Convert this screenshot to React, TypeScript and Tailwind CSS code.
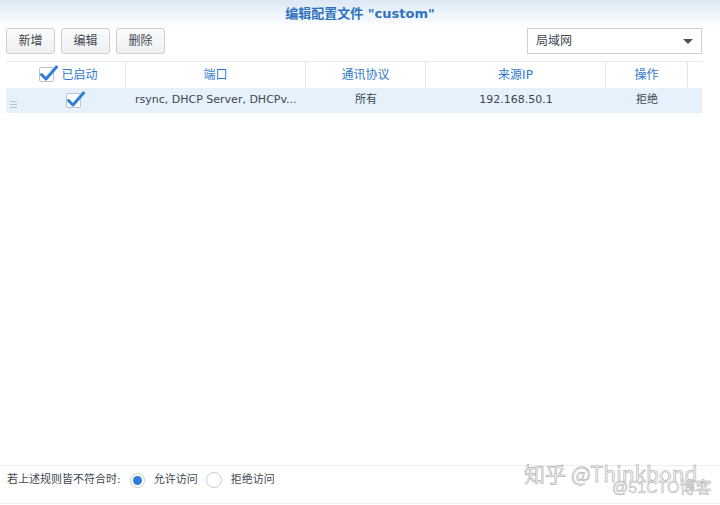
import React from "react";

const latin = "font-['DejaVu_Sans','Noto_Sans_CJK_SC',sans-serif]";

function Check({ className = "" }: { className?: string }) {
  return (
    <span className={"relative inline-block h-[15px] w-[15px] rounded-[2px] border border-[#b9c3cc] bg-white " + className}>
      <svg className="absolute -left-[1px] -top-[3px]" width="19" height="17" viewBox="0 0 19 17">
        <path d="M2.5 9.5 L7 14 L17.5 2" fill="none" stroke="#2f7fd8" strokeWidth="3" strokeLinecap="round" strokeLinejoin="round" />
      </svg>
    </span>
  );
}

function Btn({ label }: { label: string }) {
  return (
    <button className="h-[26px] w-[49px] rounded-[3px] border border-[#c9ced3] bg-gradient-to-b from-[#fbfbfb] to-[#eef0f2] text-[12px] text-[#404850]">
      {label}
    </button>
  );
}

export default function App() {
  return (
    <div className={"relative flex h-[505px] w-[720px] flex-col overflow-hidden bg-white text-[#3c4650] " + latin}>
      {/* title */}
      <div className="flex h-[28px] items-center justify-center bg-gradient-to-b from-[#dce8f4] to-white">
        <span className="text-[13px] font-bold text-[#2f72c0]">编辑配置文件 "custom"</span>
      </div>

      {/* toolbar */}
      <div className="flex h-[26px] items-center px-[6px]">
        <div className="flex gap-[6px]">
          <Btn label="新增" />
          <Btn label="编辑" />
          <Btn label="删除" />
        </div>
        <div className="ml-auto mr-[12px] flex h-[26px] w-[175px] items-center border border-[#ccd2d8] bg-white px-[8px] text-[12px] text-[#404850]">
          <span>局域网</span>
          <span className="ml-auto h-0 w-0 border-x-[5px] border-t-[5px] border-x-transparent border-t-[#4a5058]" />
        </div>
      </div>

      {/* table */}
      <div className="mx-[6px] mr-[18px] mt-[7px] border-t border-[#e6e9ec]">
        <div className="grid h-[25px] grid-cols-[120px_180px_120px_180px_82px_1fr] text-[12px] text-[#2f78cc]">
          <div className="flex items-center justify-center gap-[7px] pl-[6px] border-r border-[#e2e6ea]">
            <Check />
            <span>已启动</span>
          </div>
          <div className="flex items-center justify-center border-r border-[#e2e6ea]">端口</div>
          <div className="flex items-center justify-center border-r border-[#e2e6ea]">通讯协议</div>
          <div className="flex items-center justify-center border-r border-[#e2e6ea]">来源IP</div>
          <div className="flex items-center justify-center border-r border-[#e2e6ea]">操作</div>
          <div />
        </div>
        <div className="mt-[1px] grid h-[25px] grid-cols-[120px_180px_120px_180px_82px_1fr] items-center bg-[#e6f1fc] text-[11px] text-[#3c4650]">
          <div className="relative flex items-center justify-center">
            <span className="absolute left-[4px] top-[8px] flex flex-col gap-[2px]">
              <span className="h-[1px] w-[7px] bg-[#b8c2cc]" />
              <span className="h-[1px] w-[7px] bg-[#b8c2cc]" />
              <span className="h-[1px] w-[7px] bg-[#b8c2cc]" />
            </span>
            <Check className="ml-[15px]" />
          </div>
          <div className="pl-[9px]">rsync, DHCP Server, DHCPv...</div>
          <div className="text-center">所有</div>
          <div className="text-center">192.168.50.1</div>
          <div className="text-center">拒绝</div>
          <div />
        </div>
      </div>

      <div className="flex-1" />

      {/* bottom */}
      <div className="mb-[1px] flex h-[39px] items-start border-y border-[#eceef0] pl-[7px] pt-[6px] text-[11px] text-[#404850]">
        <div className="flex items-center">
          <span>若上述规则皆不符合时:</span>
          <span className="ml-[9px] flex h-[15px] w-[15px] items-center justify-center rounded-full border border-[#c8cdd2] bg-white">
            <span className="h-[9px] w-[9px] rounded-full bg-[#2f7fd8]" />
          </span>
          <span className="ml-[9px]">允许访问</span>
          <span className="ml-[8px] h-[16px] w-[16px] rounded-full border border-[#c8cdd2] bg-white" />
          <span className="ml-[9px]">拒绝访问</span>
        </div>
      </div>

      {/* watermarks */}
      <div className="pointer-events-none absolute left-[524px] top-[458px] text-[21px] text-[#f4f4f4] [-webkit-text-stroke:0.5px_#a0a0a0] font-['Noto_Sans_CJK_SC',sans-serif]">
        知乎 @Thinkbond
      </div>
      <div className="pointer-events-none absolute left-[612px] top-[476px] text-[16px] text-[#f4f4f4] [-webkit-text-stroke:0.5px_#b0b0b0] font-['Liberation_Sans','Noto_Sans_CJK_SC',sans-serif]">
        @51CTO博客
      </div>
    </div>
  );
}
